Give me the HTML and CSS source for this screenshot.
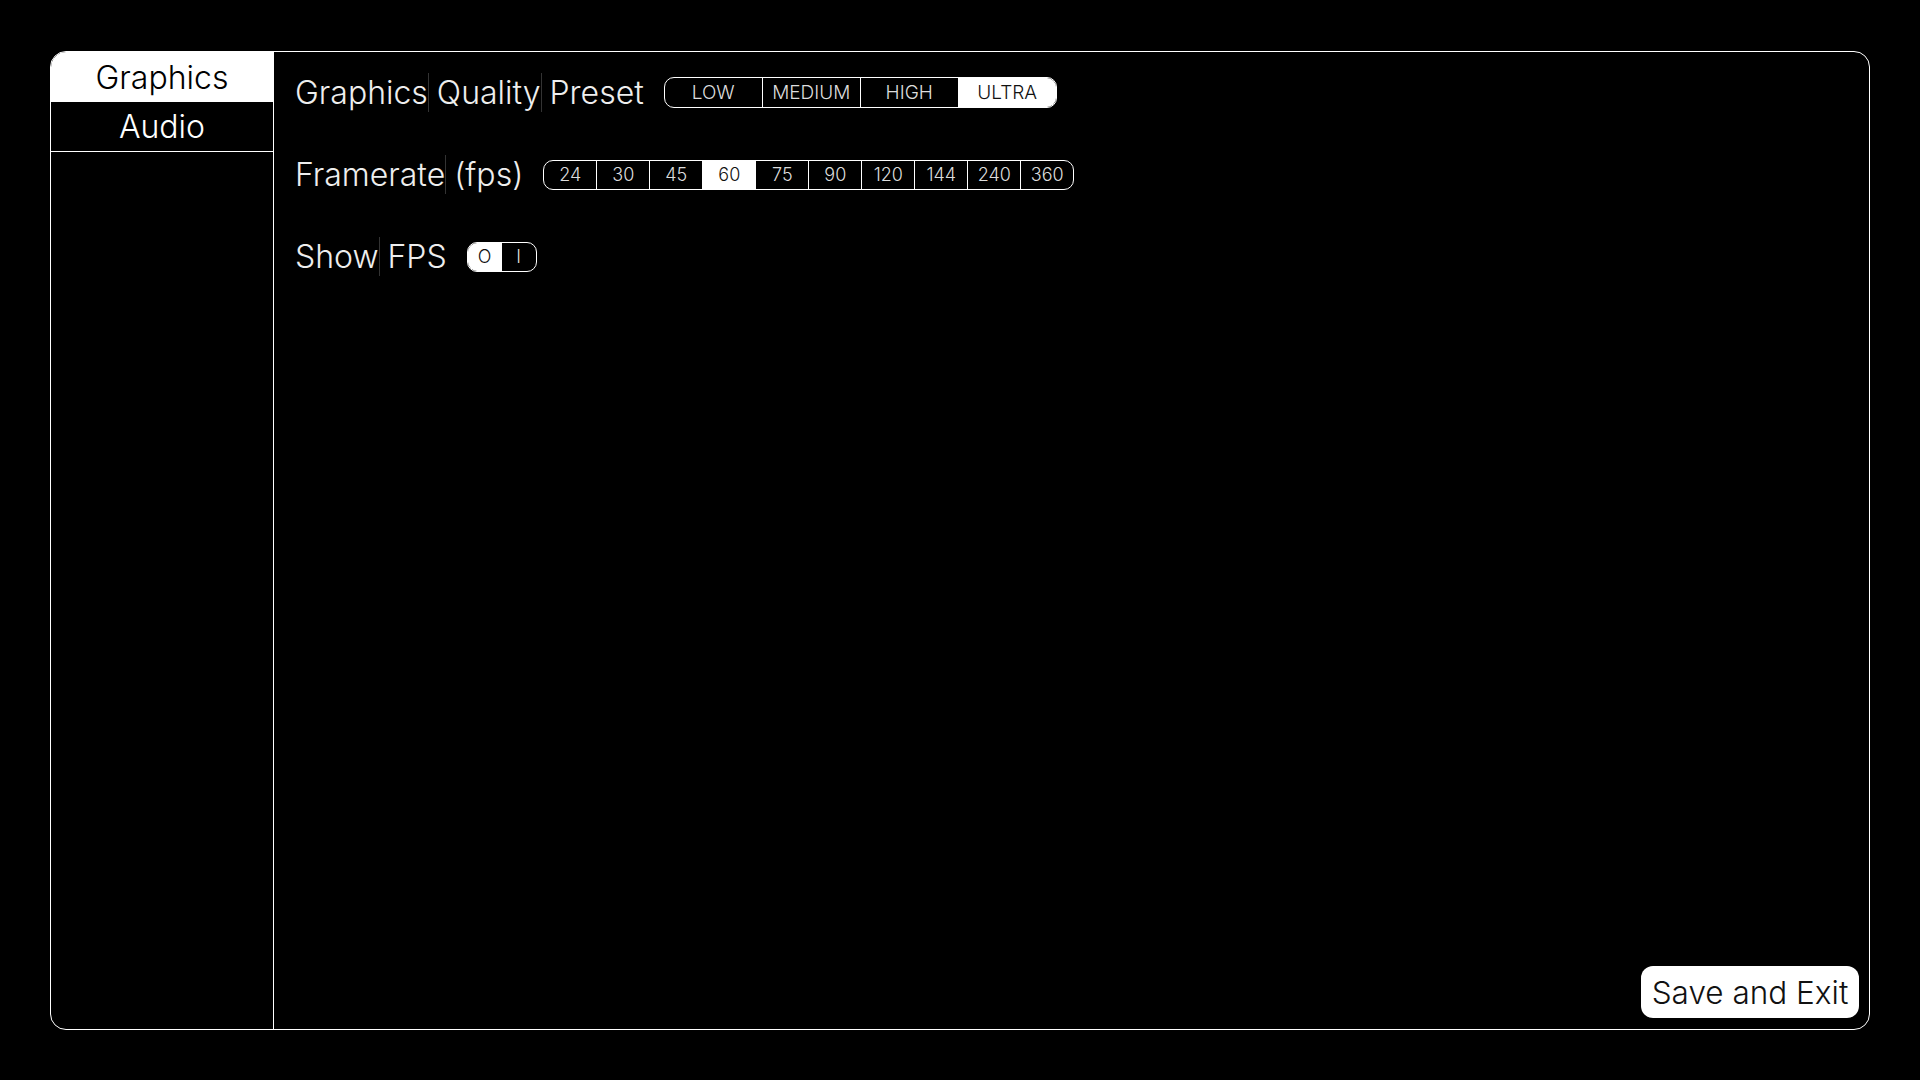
FILE: index.html
```html
<!DOCTYPE html>
<html lang="en">
<head>
<meta charset="utf-8">
<title>Settings</title>
<link rel="stylesheet" href="styles.css">
</head>
<body>
<div class="window">
  <nav class="sidebar">
    <div class="tab tab-active">Graphics</div>
    <div class="tab">Audio</div>
  </nav>
  <main class="content">
    <div class="rows">
      <div class="row">
        <div class="label"><span class="w">Graphics</span> <span class="w">Quality</span> Preset</div>
        <div class="seg seg-preset">
          <div class="opt">LOW</div>
          <div class="opt">MEDIUM</div>
          <div class="opt">HIGH</div>
          <div class="opt on">ULTRA</div>
        </div>
      </div>
      <div class="row">
        <div class="label"><span class="w">Framerate</span> (fps)</div>
        <div class="seg seg-fps">
          <div class="opt">24</div>
          <div class="opt">30</div>
          <div class="opt">45</div>
          <div class="opt on">60</div>
          <div class="opt">75</div>
          <div class="opt">90</div>
          <div class="opt">120</div>
          <div class="opt">144</div>
          <div class="opt">240</div>
          <div class="opt">360</div>
        </div>
      </div>
      <div class="row">
        <div class="label"><span class="w">Show</span> FPS</div>
        <div class="seg seg-toggle">
          <div class="opt on">O</div>
          <div class="opt">I</div>
        </div>
      </div>
    </div>
    <div class="footer">
      <button class="save">Save and Exit</button>
    </div>
  </main>
</div>
</body>
</html>
```
FILE: styles.css
```css
html, body {
  margin: 0;
  padding: 0;
  background: #000;
}
body {
  font-family: Inter, "Noto Sans", sans-serif;
  font-weight: 300;
  color: #f0f0f0;
  padding: 51px 50px 0 50px;
}
.window {
  box-sizing: border-box;
  width: 1820px;
  height: 979px;
  border: 1px solid #fff;
  border-radius: 16px;
  display: flex;
  overflow: hidden;
}
.sidebar {
  width: 222px;
  border-right: 1px solid #fff;
  display: flex;
  flex-direction: column;
  flex-shrink: 0;
}
.tab {
  height: 49px;
  border-bottom: 1px solid #fff;
  display: flex;
  align-items: center;
  justify-content: center;
  font-size: 32px;
  color: #fff;
}
.tab-active {
  height: 50px;
  border-bottom: none;
  background: #fff;
  color: #000;
  border-top-left-radius: 15px;
}
.content {
  flex: 1;
  display: flex;
  flex-direction: column;
  justify-content: space-between;
  padding: 25px 10px 11px 21px;
}
.rows {
  display: flex;
  flex-direction: column;
  gap: 51px;
}
.row {
  display: flex;
  align-items: center;
  gap: 20px;
  height: 31px;
}
.label {
  font-size: 32px;
  letter-spacing: 0;
  color: #eee;
  white-space: nowrap;
}
.w {
  box-shadow: 1px 0 0 #333;
}
.seg {
  display: flex;
  border: 1px solid #fff;
  border-radius: 10px;
  overflow: hidden;
  box-sizing: border-box;
}
.opt {
  display: flex;
  align-items: center;
  justify-content: center;
  color: #ddd;
}
.opt + .opt {
  border-left: 1px solid #fff;
}
.opt.on {
  background: #fff;
  color: #111;
}
.seg-preset {
  height: 31px;
}
.seg-preset .opt {
  width: 97px;
  font-size: 19px;
}
.seg-fps {
  height: 30px;
}
.seg-fps .opt {
  width: 52px;
  font-size: 18px;
}
.seg-toggle {
  height: 30px;
}
.seg-toggle .opt {
  width: 34px;
  font-size: 18px;
}
.seg-toggle .opt + .opt {
  border-left: none;
}
.footer {
  display: flex;
  justify-content: flex-end;
}
.save {
  font-family: Inter, "Noto Sans", sans-serif;
  font-weight: 300;
  font-size: 31.5px;
  color: #111;
  background: #fff;
  border: none;
  border-radius: 12px;
  height: 52px;
  width: 218px;
  padding: 0;
  display: flex;
  align-items: center;
  justify-content: center;
}
```
